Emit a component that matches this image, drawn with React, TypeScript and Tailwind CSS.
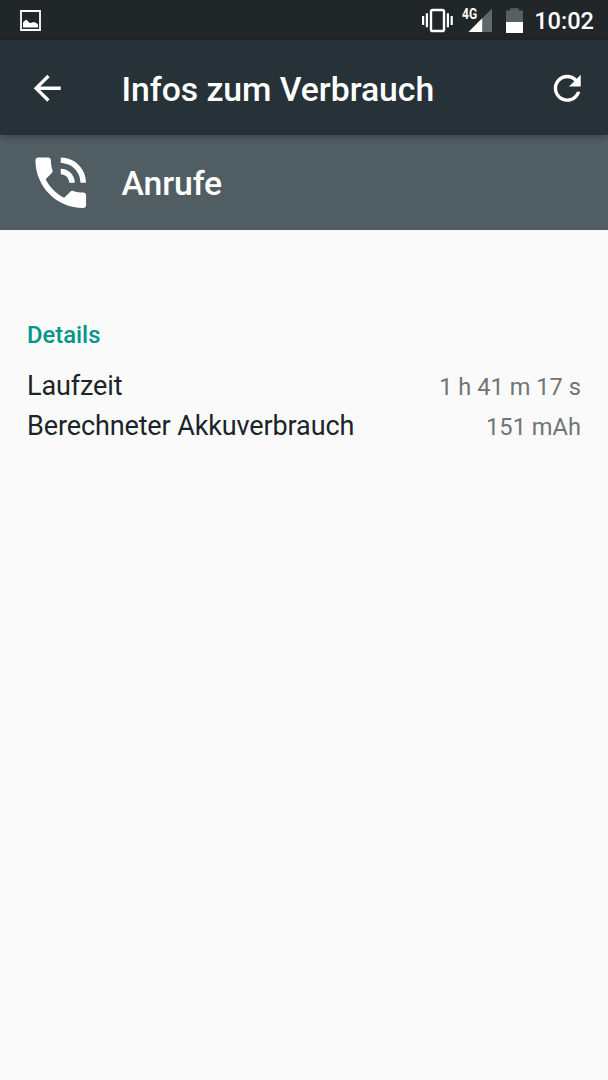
const details = [
  { label: "Laufzeit", value: "1 h 41 m 17 s" },
  { label: "Berechneter Akkuverbrauch", value: "151 mAh" },
];

function StatusBar() {
  return (
    <div className="flex h-10 shrink-0 items-center bg-[#212629] text-white">
      <svg className="ml-5 size-5.25" viewBox="0 0 21 21">
        <path d="M1 1h19v19H1z" fill="none" stroke="currentColor" strokeWidth="1.8" />
        <path d="M3 17.500v-5l2-2 1.500-.8 2.500 2.800 2 .5 2.500-1 1.500.5 1.500.5 1.500 1.500v3z" fill="currentColor" />
      </svg>
      <div className="ml-auto flex items-center">
        <svg className="h-10 w-8" viewBox="0 0 32 40" fill="currentColor">
          <path d="M0 16h2.2v9H0zM3.8 13.2H6v14H3.8zM24.8 13.2H27v14h-2.2zM28.6 16h2.2v9h-2.2z" />
          <rect x="9" y="10" width="13" height="21" rx="1.6" fill="none" stroke="currentColor" strokeWidth="2.4" />
        </svg>
        <div className="relative ml-2 h-10 w-8">
          <svg className="h-10 w-8" viewBox="0 0 32 40">
            <path d="M30 8.5V32H6.5z" fill="#5f686c" />
            <path d="M20.2 18.3V32H6.5z" fill="#fff" />
          </svg>
          <span className="absolute top-[7px] left-0 origin-left scale-x-80 text-[15px] leading-[15px] font-bold">4G</span>
        </div>
        <svg className="ml-3 h-10 w-[17px]" viewBox="0 0 17 40">
          <path d="M4.2 8.2h8.6v2.3H17V22H0V10.5h4.2z" fill="#565f63" />
          <path d="M0 22h17v11H0z" fill="#fff" />
        </svg>
        <span className="mr-3.5 ml-[11px] pt-0.5 text-[23.6px] leading-10 font-medium">10:02</span>
      </div>
    </div>
  );
}

export default function App() {
  return (
    <main className="flex h-[1080px] w-[608px] flex-col bg-[#fafafa] font-['Roboto',sans-serif]">
      <StatusBar />

      <header className="relative flex h-[95px] shrink-0 items-center bg-[#263238] px-[27px] text-white shadow-[0_2px_7px_rgba(0,0,0,0.3)]">
        <svg className="mt-px size-[40.5px]" viewBox="0 0 24 24" fill="currentColor">
          <path d="M20 11H7.83l5.59-5.59L12 4l-8 8 8 8 1.41-1.41L7.83 13H20v-2z" />
        </svg>
        <h1 className="ml-[54px] pt-1 text-[33.75px] leading-10 font-medium tracking-[-0.04px]">Infos zum Verbrauch</h1>
        <svg className="mt-px -mr-[6px] ml-auto size-[40.5px]" viewBox="0 0 24 24" fill="currentColor">
          <path d="M17.65 6.35C16.2 4.9 14.21 4 12 4c-4.42 0-7.99 3.58-7.99 8s3.57 8 7.99 8c3.73 0 6.84-2.55 7.73-6h-2.08c-.82 2.33-3.04 4-5.65 4-3.31 0-6-2.69-6-6s2.69-6 6-6c1.66 0 3.14.69 4.22 1.78L13 11h7V4l-2.35 2.35z" />
        </svg>
      </header>

      <div className="flex h-[94.5px] shrink-0 items-center bg-[#505e64] px-[27px] text-white">
        <svg className="size-[67.5px]" viewBox="0 0 24 24" fill="currentColor">
          <path d="M20 15.5c-1.25 0-2.45-.2-3.57-.57-.35-.11-.74-.03-1.02.24l-2.2 2.2c-2.83-1.44-5.15-3.75-6.59-6.59l2.2-2.21c.28-.26.36-.65.25-1C8.7 6.45 8.5 5.25 8.5 4c0-.55-.45-1-1-1H4c-.55 0-1 .45-1 1 0 9.39 7.61 17 17 17 .55 0 1-.45 1-1v-3.5c0-.55-.45-1-1-1zM19 12h2c0-4.97-4.03-9-9-9v2c3.87 0 7 3.13 7 7zm-4 0h2c0-2.76-2.24-5-5-5v2c1.66 0 3 1.34 3 3z" />
        </svg>
        <h2 className="ml-[27px] pt-[3.5px] text-[33.75px] leading-10 font-medium tracking-[-0.1px]">Anrufe</h2>
      </div>

      <section className="px-[27px] pt-[89.5px]">
        <h3 className="text-[23.8px] leading-8 font-medium text-[#009688]">Details</h3>
        <dl className="mt-[15px]">
          {details.map((row) => (
            <div key={row.label} className="flex h-10 items-center justify-between">
              <dt className="text-[27px] leading-10 tracking-[-0.12px] text-[#1b2529]">{row.label}</dt>
              <dd className="pt-0.5 text-[23.6px] leading-10 tracking-[0.03px] text-[#6f7575]">{row.value}</dd>
            </div>
          ))}
        </dl>
      </section>
    </main>
  );
}
